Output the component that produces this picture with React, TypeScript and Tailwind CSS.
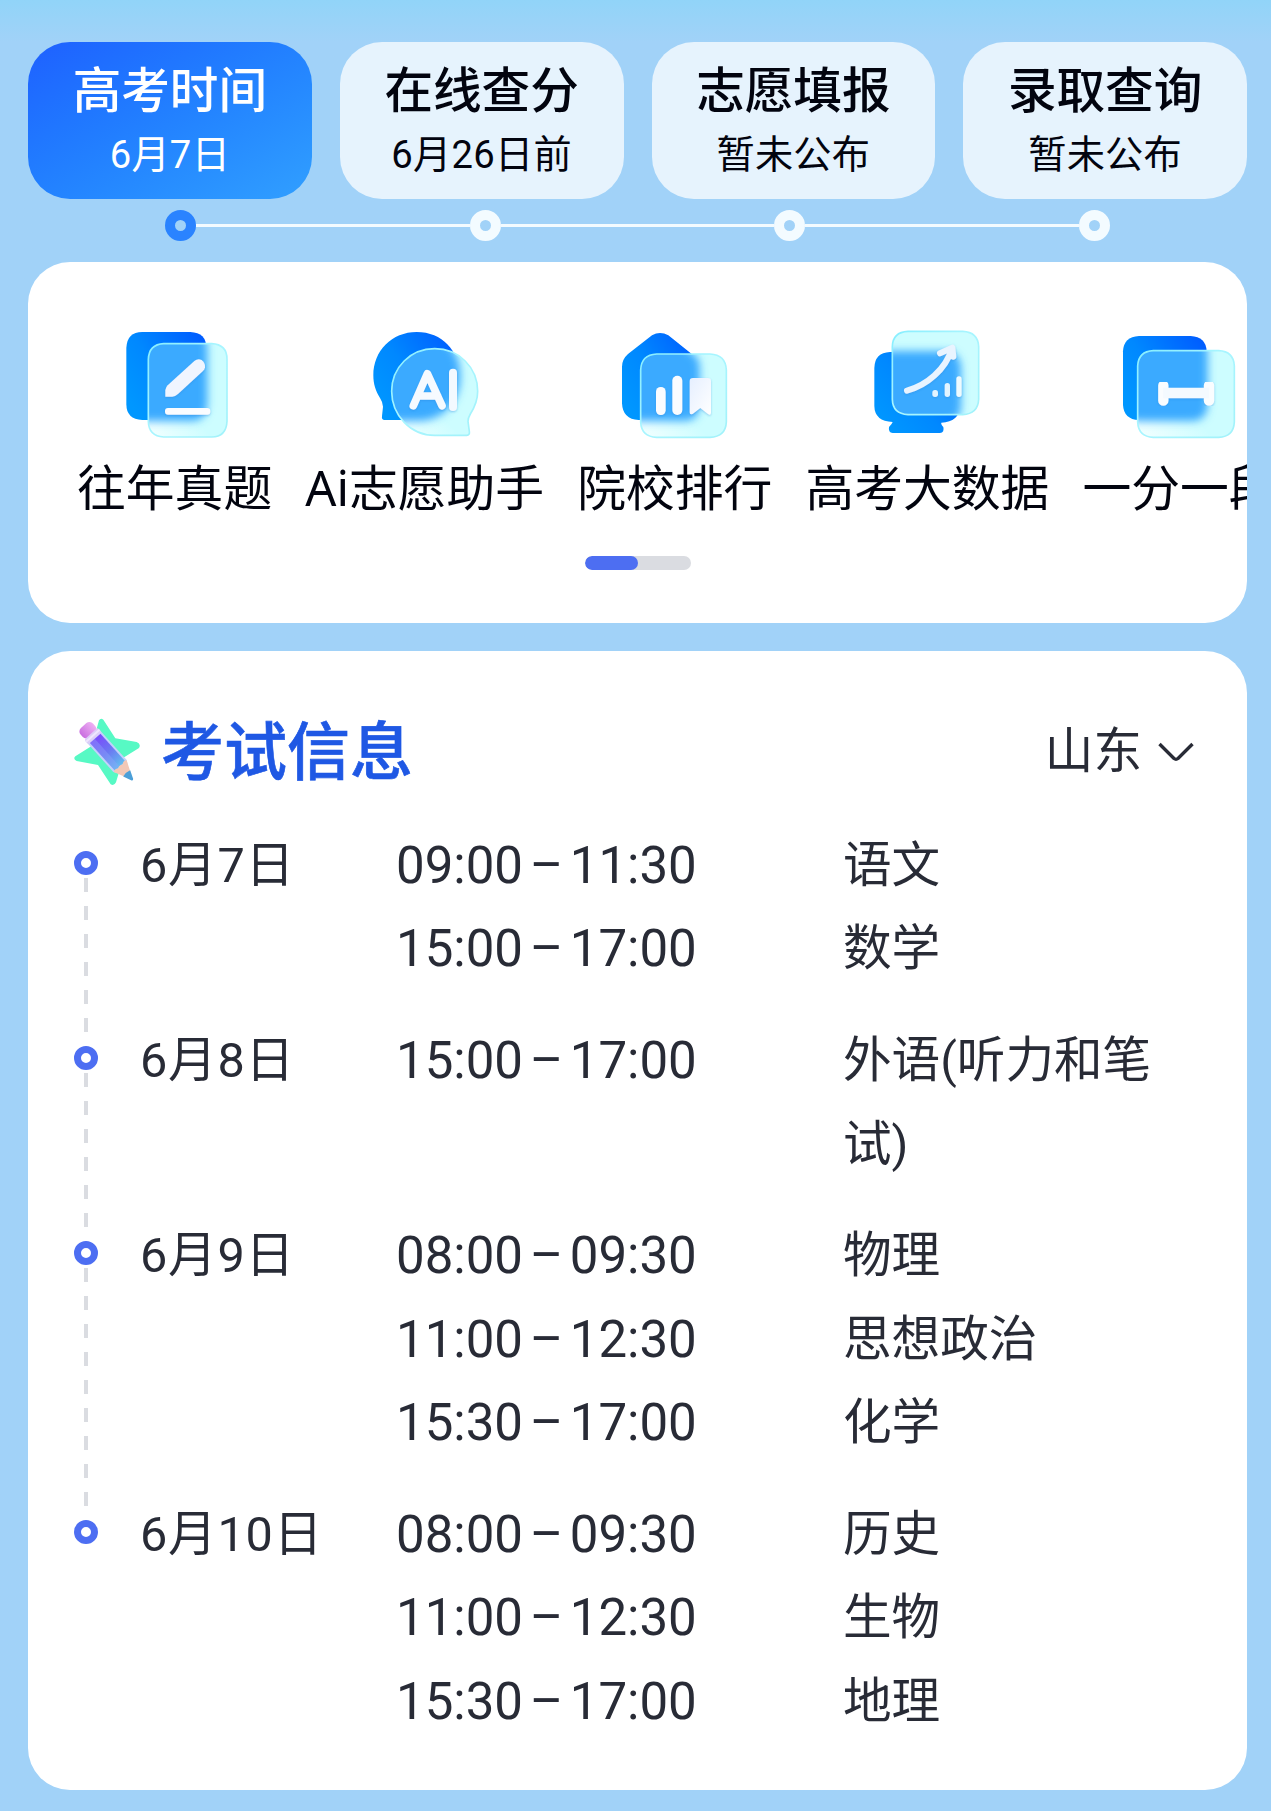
import type { ReactNode } from "react";

const steps = [
  { title: "高考时间", note: "6月7日", active: true },
  { title: "在线查分", note: "6月26日前", active: false },
  { title: "志愿填报", note: "暂未公布", active: false },
  { title: "录取查询", note: "暂未公布", active: false },
];

const exams = [
  {
    date: "6月7日",
    height: "h-[195.2px]",
    rows: [
      ["09:00 – 11:30", "语文"],
      ["15:00 – 17:00", "数学"],
    ],
  },
  { date: "6月8日", height: "h-[195.2px]", rows: [["15:00 – 17:00", "外语(听力和笔试)"]] },
  {
    date: "6月9日",
    height: "h-[278.6px]",
    rows: [
      ["08:00 – 09:30", "物理"],
      ["11:00 – 12:30", "思想政治"],
      ["15:30 – 17:00", "化学"],
    ],
  },
  {
    date: "6月10日",
    height: "h-[250px]",
    rows: [
      ["08:00 – 09:30", "历史"],
      ["11:00 – 12:30", "生物"],
      ["15:30 – 17:00", "地理"],
    ],
  },
];

// Solid blue shape at the back, frosted pane in front of it, glyph on top
function GlassIcon({
  id,
  viewBox,
  back,
  front,
  children,
}: {
  id: string;
  viewBox: string;
  back: string;
  front: string;
  children: ReactNode;
}) {
  return (
    <svg viewBox={viewBox} className="h-[120px] w-[120px] shrink-0" aria-hidden>
      <defs>
        <linearGradient id={`${id}-back`} x1="0" y1="0.75" x2="1" y2="0">
          <stop offset="0" stopColor="#0097ff" />
          <stop offset="0.4" stopColor="#0088ff" />
          <stop offset="1" stopColor="#0058ff" />
        </linearGradient>
        <linearGradient id={`${id}-pane`} x1="0" y1="1" x2="0.4" y2="0.6">
          <stop offset="0" stopColor="#f4ffff" />
          <stop offset="1" stopColor="#cdfdff" />
        </linearGradient>
        <linearGradient id={`${id}-edge`} x1="0" y1="0" x2="1" y2="1">
          <stop offset="0" stopColor="#86eeff" />
          <stop offset="0.45" stopColor="#a8f5ff" />
          <stop offset="1" stopColor="#a2f2fa" />
        </linearGradient>
        <linearGradient id={`${id}-glyph`} x1="0" y1="0" x2="1" y2="1">
          <stop offset="0" stopColor="#e6efff" />
          <stop offset="1" stopColor="#ffffff" />
        </linearGradient>
        <filter id={`${id}-blur`} x="-20%" y="-20%" width="140%" height="140%">
          <feGaussianBlur stdDeviation="12" />
        </filter>
        <filter id={`${id}-shadow`} x="-20%" y="-20%" width="140%" height="150%">
          <feDropShadow dx="0" dy="3" stdDeviation="3" floodColor="#2b83d8" floodOpacity="0.4" />
        </filter>
        <clipPath id={`${id}-clip`}>
          <path d={front} />
        </clipPath>
      </defs>
      <path d={back} fill={`url(#${id}-back)`} />
      <path d={front} fill={`url(#${id}-pane)`} />
      <g clipPath={`url(#${id}-clip)`}>
        <path d={back} fill="#3aaaff" stroke="#3aaaff" strokeWidth="6" filter={`url(#${id}-blur)`} />
      </g>
      <path d={front} fill="none" stroke={`url(#${id}-edge)`} strokeWidth="5" />
      <g filter={`url(#${id}-shadow)`}>{children}</g>
    </svg>
  );
}

function PaperIcon() {
  return (
    <GlassIcon
      id="paper"
      viewBox="164 42 360 360"
      back="M246 66H390Q438 68 438 114V282Q436 330 390 330H246Q198 328 198 282V114Q200 66 246 66Z"
      front="M310 101H454Q500 103 500 148V334Q498 381 454 381H310Q265 379 264 334V148Q266 103 310 101Z"
    >
      <path d="M315 260V240Q316 232 322 226L402 153Q412 145 424 150Q435 158 434 172Q433 178 428 183L353 252Q344 260 336 260Z" fill="#f0f5ff" />
      <rect x="314" y="294" width="136" height="20" rx="9" fill="#fafcff" />
    </GlassIcon>
  );
}

function AssistantIcon() {
  return (
    <GlassIcon
      id="assistant"
      viewBox="913 42 360 360"
      back="M1068 66C1145 66 1196 122 1196 196C1196 275 1145 330 1068 330H972Q962 330 964 318L967 290Q967 278 958 264C945 243 938 222 938 196C938 122 994 66 1068 66Z"
      front="M1122 116C1050 116 993 172 993 244C993 316 1050 376 1122 376H1218Q1228 375 1226 364L1222 334Q1222 324 1229 312C1242 292 1251 270 1251 244C1251 172 1194 116 1122 116Z"
    >
      <path d="M1058 287L1100 191L1144 287M1073 258H1131" fill="none" stroke="#f6faff" strokeWidth="23" strokeLinecap="round" strokeLinejoin="round" />
      <path d="M1177 188V291" stroke="#f3f9ff" strokeWidth="24" strokeLinecap="round" />
    </GlassIcon>
  );
}

function RankIcon() {
  return (
    <GlassIcon
      id="rank"
      viewBox="165 42 360 360"
      back="M276 76Q300 62 325 76L398 134Q416 148 416 170V284Q414 330 370 330H236Q188 328 186 280V170Q186 148 204 132Z"
      front="M290 132H450Q497 134 499 180V336Q497 380 450 382H290Q244 380 242 336V180Q244 134 290 132Z"
    >
      <rect x="288" y="231" width="29" height="84" rx="14" fill="#fafcff" />
      <rect x="337" y="197" width="30" height="118" rx="15" fill="#fafcff" />
      <path d="M389 214Q389 204 399 204H443Q453 204 453 214V308Q452 318 444 312L421 294L399 311Q389 316 389 307Z" fill="url(#rank-glyph)" />
    </GlassIcon>
  );
}

function DataIcon() {
  return (
    <GlassIcon
      id="data"
      viewBox="921 42 360 360"
      back="M990 126H1150Q1198 128 1200 174V290Q1198 334 1144 338Q1142 342 1150 351Q1154 368 1140 369H998Q984 368 987 351Q996 342 998 336Q944 334 943 288V174Q944 128 990 126Z"
      front="M1044 64H1208Q1254 66 1256 110V268Q1254 312 1208 314H1044Q998 312 997 268V110Q998 66 1044 64Z"
    >
      <path d="M1041 242C1100 226 1156 180 1177 114M1140 130L1177 113L1180 140" fill="none" stroke="#e9f4ff" strokeWidth="18" strokeLinecap="round" strokeLinejoin="round" />
      <rect x="1117" y="240" width="17" height="21" rx="8" fill="#e3f4ff" />
      <rect x="1154" y="219" width="16" height="42" rx="8" fill="#e3f4ff" />
      <rect x="1189" y="199" width="16" height="62" rx="8" fill="#eefbff" />
    </GlassIcon>
  );
}

function SegmentIcon() {
  return (
    <GlassIcon
      id="segment"
      viewBox="360 42 360 360"
      back="M417 78H572Q618 80 620 124V284Q618 330 572 330H417Q371 328 369 284V124Q371 80 417 78Z"
      front="M460 122H656Q701 124 703 168V336Q701 380 656 382H460Q415 380 413 336V168Q415 124 460 122Z"
    >
      <path d="M490 226V272M627 226V272" stroke="#fafdff" strokeWidth="31" strokeLinecap="round" />
      <path d="M490 249H627" stroke="#f4faff" strokeWidth="31" />
    </GlassIcon>
  );
}

function PencilStar() {
  return (
    <svg viewBox="66 84 210 210" className="h-[70px] w-[70px]" aria-hidden>
      <defs>
        <linearGradient id="barrel" x1="0" y1="0" x2="1" y2="0">
          <stop offset="0" stopColor="#7a4bfb" />
          <stop offset="0.5" stopColor="#6b78f2" />
          <stop offset="1" stopColor="#62bdf0" />
        </linearGradient>
        <linearGradient id="rubber" x1="0" y1="0" x2="0" y2="1">
          <stop offset="0" stopColor="#eeb0f3" />
          <stop offset="1" stopColor="#c96ee0" />
        </linearGradient>
      </defs>
      <path
        d="M147 94Q152 86 160 92L196 148L260 159Q274 165 267 177L220 206L198 280Q192 292 182 286L144 228L80 216Q68 210 76 202L126 170Z"
        fill="#57f9c4"
      />
      <g transform="translate(113 123) rotate(48)">
        <path d="M20 -27H145L176 -8V8L145 27H20Z" fill="#c3d0fb" />
        <rect x="-18" y="-25" width="38" height="50" rx="14" fill="url(#rubber)" />
        <rect x="15" y="-27" width="19" height="54" rx="5" fill="#dccdf8" />
        <rect x="20" y="-27" width="6" height="54" fill="#efe6fd" />
        <rect x="34" y="-21" width="112" height="42" fill="url(#barrel)" />
        <rect x="34" y="2" width="110" height="19" fill="#8fa5fa" opacity="0.4" />
        <path d="M146 -26Q139 -17 147 -9Q140 0 147 9Q139 17 146 26L184 9V-9Z" fill="#f2c8b6" />
        <path d="M175 -14L199 -4Q206 0 199 4L175 14Q170 0 175 -14Z" fill="#4b9fd8" />
      </g>
    </svg>
  );
}

const tools = [
  { name: "往年真题", icon: <PaperIcon /> },
  { name: "Ai志愿助手", icon: <AssistantIcon /> },
  { name: "院校排行", icon: <RankIcon /> },
  { name: "高考大数据", icon: <DataIcon /> },
  { name: "一分一段", icon: <SegmentIcon /> },
];

function StepTabs() {
  return (
    <>
      <div className="grid grid-cols-4 gap-7">
        {steps.map((step) => (
          <div
            key={step.title}
            className={
              step.active
                ? "flex h-[157px] flex-col items-center rounded-[42px] bg-linear-to-br from-[#1f60ff] to-[#319fff] pt-[14px] text-white"
                : "flex h-[157px] flex-col items-center rounded-[42px] bg-[#e6f3fd] pt-[14px] text-[#02040f]"
            }
          >
            <div className="font-['Noto_Sans_CJK_SC',sans-serif] text-[48.6px] leading-[62px] font-medium">{step.title}</div>
            <div className="mt-[9px] text-[38.2px] leading-[56px] tracking-[0.3px]">{step.note}</div>
          </div>
        ))}
      </div>
      <div className="mt-[11px] flex h-[31px]">
        {steps.map((step, index) => (
          <div key={step.title} className="flex flex-1 items-center">
            <div className={index === 0 ? "h-[3px] flex-1" : "h-[3px] flex-1 bg-[#f3fbff]"} />
            <div
              className={
                step.active
                  ? "size-[31px] rounded-full border-10 border-[#2a83ff]"
                  : "size-[31px] rounded-full border-10 border-[#f3fbff]"
              }
            />
            <div className={index === steps.length - 1 ? "h-[3px] flex-1" : "h-[3px] flex-1 bg-[#f3fbff]"} />
          </div>
        ))}
      </div>
    </>
  );
}

function ToolStrip() {
  return (
    <section className="mt-[21px] h-[361px] overflow-hidden rounded-[42px] bg-white pt-[62px] font-['Noto_Sans','Noto_Sans_CJK_SC',sans-serif]">
      <div className="flex gap-[33px] pl-[49px]">
        {tools.map((tool) => (
          <div key={tool.name} className="flex shrink-0 flex-col items-center">
            {tool.icon}
            <div className="mt-[10px] text-[48.8px] leading-[66px] whitespace-nowrap text-[#02040f]">{tool.name}</div>
          </div>
        ))}
      </div>
      <div className="mx-auto mt-[36px] h-[14px] w-[106px] overflow-hidden rounded-full bg-[#dadce1]">
        <div className="h-full w-1/2 rounded-full bg-[#4d6ef2]" />
      </div>
    </section>
  );
}

function ExamInfo() {
  return (
    <section className="mt-[28px] h-[1139px] rounded-[42px] bg-white pt-[66px] text-[#282b36]">
      <header className="flex h-[70px] items-center pr-[53px] pl-[44px]">
        <PencilStar />
        <h2 className="mt-[2px] ml-[19px] text-[63px] leading-[70px] font-medium text-[#1f58e4] [-webkit-text-stroke:0.6px_#1f58e4]">
          考试信息
        </h2>
        <div className="ml-auto flex items-center gap-4">
          <span className="text-[48.6px] leading-[70px]">山东</span>
          <svg viewBox="0 0 36 20" className="h-5 w-9" fill="none" stroke="currentColor" strokeWidth="3.4" aria-hidden>
            <path d="M1.5 2L16 16.5Q18 18 20 16.5L34.5 2" />
          </svg>
        </div>
      </header>
      <ul className="mt-[37px] pl-[46px] text-[48.6px] leading-[83.4px]">
        {exams.map((exam, index) => (
          <li key={exam.date} className={`flex ${exam.height}`}>
            <div className="flex w-6 flex-col items-center pt-[27px]">
              <div className="size-6 shrink-0 rounded-full border-7 border-[#4d6ef2]" />
              {index < exams.length - 1 && (
                <div className="mt-[3px] -mb-[27px] w-1 flex-1 bg-[repeating-linear-gradient(to_bottom,#dadce1_0_14px,transparent_14px_28px)]" />
              )}
            </div>
            <div className="ml-[42px] w-[256px] tracking-[0.8px]">{exam.date}</div>
            <div>
              {exam.rows.map(([time, subject]) => (
                <div key={time} className="flex">
                  <div className="w-[447px] text-[51px] whitespace-nowrap [word-spacing:-6px]">{time}</div>
                  <div className="w-[330px]">{subject}</div>
                </div>
              ))}
            </div>
          </li>
        ))}
      </ul>
    </section>
  );
}

export default function App() {
  return (
    <main
      lang="zh-CN"
      className="h-[1811px] w-[1271px] overflow-hidden bg-[#a1d2f8] bg-linear-to-b from-[#91d4f8] to-[#a1d2f8] to-[42px] pt-[42px] pr-6 pl-7 font-['Roboto','Noto_Sans_CJK_SC',sans-serif]"
    >
      <StepTabs />
      <ToolStrip />
      <ExamInfo />
    </main>
  );
}
